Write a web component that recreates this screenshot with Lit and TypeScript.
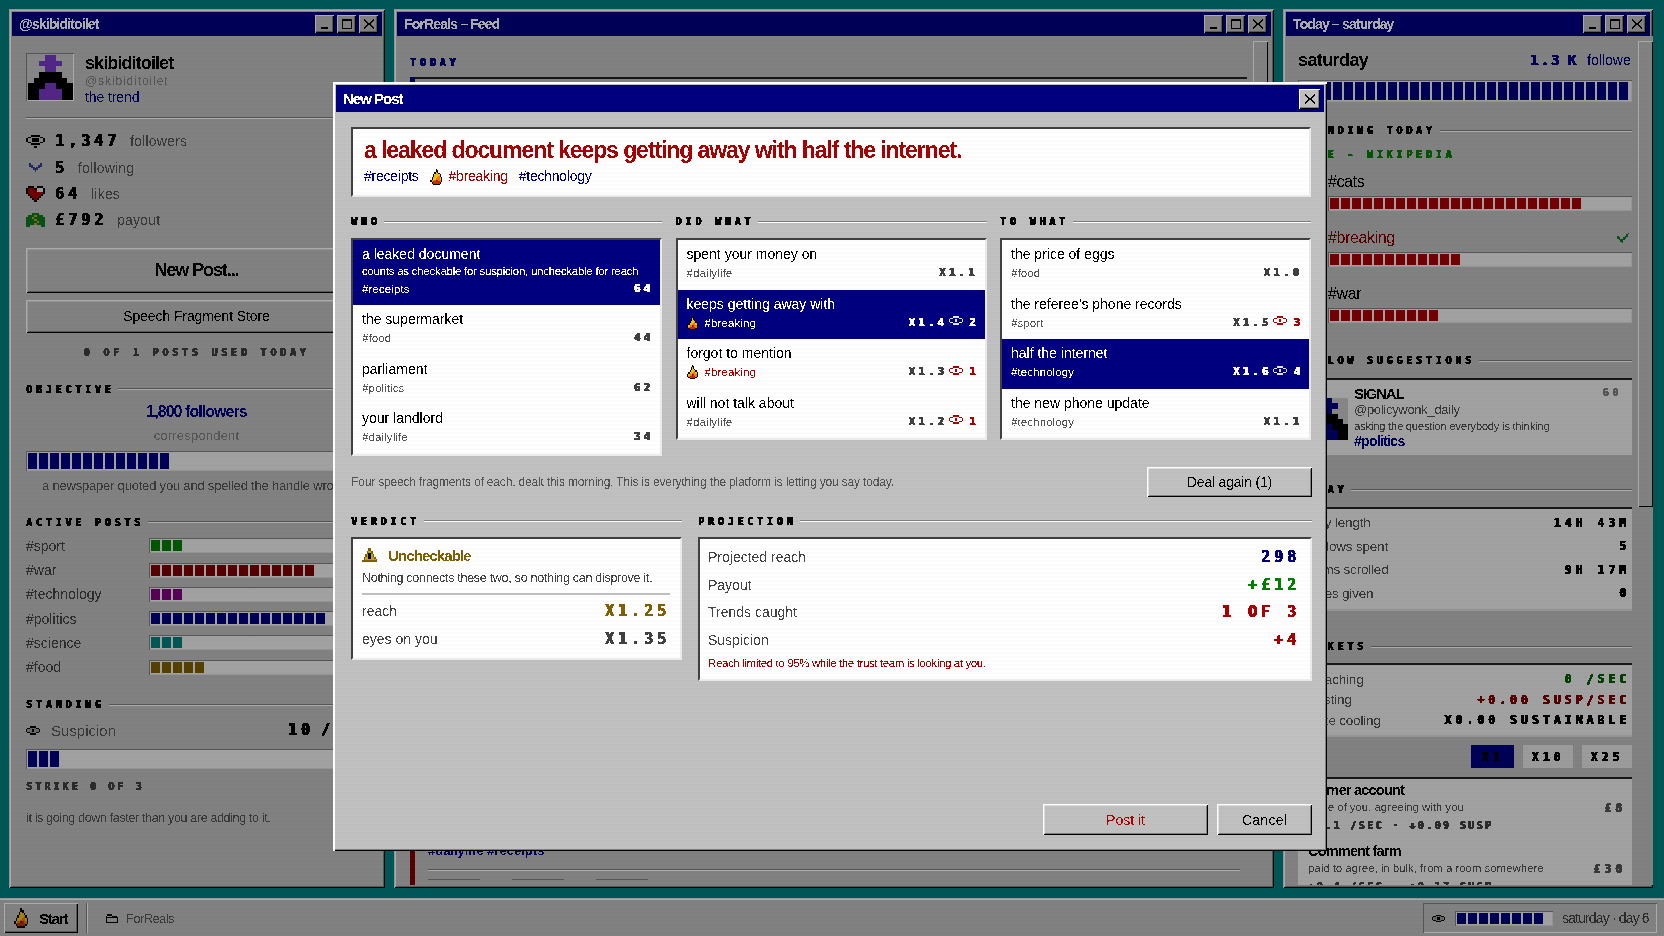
import { LitElement, html, css, svg, nothing } from "lit";
import { customElement } from "lit/decorators.js";

const PAL: Record<string, string> = {
  "#": "#000000", k: "#222222", w: "#ffffff", g: "#9a9a9a", d: "#555555",
  r: "#a80000", R: "#c82a10", y: "#f2c200", o: "#ee7a10", n: "#000080", N: "#3a3a9a",
  v: "#0a7a20", V: "#085a18", c: "#c0a020", a: "#806000", p: "#7a3ac8", P: "#e4e4e4",
};
function art(rows: string[], w: number, h: number) {
  const rects = [];
  for (let y = 0; y < rows.length; y++) {
    for (let x = 0; x < rows[y].length; x++) {
      const ch = rows[y][x];
      if (ch !== ".") rects.push(svg`<rect x=${x} y=${y} width="1.02" height="1.02" fill=${PAL[ch]}></rect>`);
    }
  }
  return html`<svg class="ic" width=${w} height=${h} viewBox="0 0 ${rows[0].length} ${rows.length}" shape-rendering="crispEdges">${rects}</svg>`;
}
const A_EYE = ["...######...", ".##......##.", "#...####...#", "#...####...#", ".##......##.", "...######...", "............", ".....##....."];
const A_EYE_SM = ["...####...", ".##gggg##.", "#ggg##ggg#", "#ggg##ggg#", ".##gggg##.", "...####..."];
const A_CHECK = ["N.....N", "NN...NN", ".NN.NN.", "..NNN..", "...N..."];
const A_CHECK_G = [".......v", "......v.", "v....vv.", "vv..vv..", ".vvvv...", "..vv....", "...v...."];
const A_HEART = [".###..###.", "#rrr##PPP#", "#rrrrrPPP#", "#rrrrrrrr#", ".#rrrrrr#.", "..#rrrr#..", "...#rr#...", "....##...."];
const A_MONEY = ["...vvvv...", ".vvvccvvv.", "vvvcvvvvvv", "vvvvccvvvv", "vvvvvvcvvv", "vvvvccvvvv", "vv......vv"];
const A_FLAME = ["....#.....", "....##....", "...#y#....", "...#yy#...", "..#yyyy#..", "..#yyyo#..", ".#yyyooy#.", ".#yyoooy#.", "#yoorRoo#.", "#oRRRRRo#.", ".#RRRRR#..", "..#####..."];
const A_WARN = ["....aa....", "....aa....", "...acca...", "...a##a...", "..ac##ca..", "..ac##ca..", ".acc##cca.", ".accccccca", "aaaaaaaaaa"];
const A_FOLDER = [".####.....", "#....####.", "##########", "#........#", "#........#", "#........#", "##########"];
const A_AVATAR = ["...pp...", "..pppp..", "...pp...", "..####..", ".######.", "###pp###", "##pppp##", "##pppp##"];
const A_AVATAR2 = ["...nn...", "..nnnn..", "...nn...", "..####..", ".######.", "###nn###", "##nnnn##", "##nnnn##"];

const eyeColored = (c: string) => {
  const m: Record<string, string> = { red: "r", white: "P" };
  const ch = m[c];
  return art([`...${ch.repeat(4)}...`, `.${ch}${ch}....${ch}${ch}.`, `${ch}...${ch}${ch}...${ch}`, `${ch}...${ch}${ch}...${ch}`, `.${ch}${ch}....${ch}${ch}.`, `...${ch.repeat(4)}...`], 14, 9);
};

const seg = (n: number, color: string) =>
  Array.from({ length: n }, () => html`<i class="seg" style="background:${color}"></i>`);
const sh = (t: string, cls = "") => html`<div class="sh ${cls}"><span class="d10">${t}</span><div class="ln"></div></div>`;

function closeX() {
  return html`<svg width="10" height="10" viewBox="0 0 10 10" shape-rendering="crispEdges"><path d="M0 0l5 4.2L10 0v1.4L6.2 5 10 8.6V10L5 5.8 0 10V8.6L3.8 5 0 1.4z" fill="#000"/></svg>`;
}
const WINBTN = html`<div class="wbs">
  <div class="wb"><svg width="12" height="10" viewBox="0 0 12 10" shape-rendering="crispEdges"><rect x="2" y="8" width="7" height="2" fill="#000"/></svg></div>
  <div class="wb"><svg width="12" height="10" viewBox="0 0 12 10" shape-rendering="crispEdges"><path d="M1 0h10v10H1zM2 2v7h8V2z" fill="#000" fill-rule="evenodd"/></svg></div>
  <div class="wb">${closeX()}</div>
</div>`;

const ACTIVE: [string, number, string][] = [
  ["#sport", 3, "#008000"], ["#war", 15, "#800000"], ["#technology", 3, "#800080"],
  ["#politics", 16, "#000080"], ["#science", 3, "#008080"], ["#food", 5, "#806000"],
];

type Item = { name: string; tag: string; val: string; eye?: number; flame?: boolean; hot?: boolean; sel?: boolean; sub?: string };
const WHO: Item[] = [
  { name: "a leaked document", tag: "#receipts", val: "64", sel: true, sub: "counts as checkable for suspicion, uncheckable for reach" },
  { name: "the supermarket", tag: "#food", val: "44" },
  { name: "parliament", tag: "#politics", val: "62" },
  { name: "your landlord", tag: "#dailylife", val: "34" },
];
const DID: Item[] = [
  { name: "spent your money on", tag: "#dailylife", val: "X1.1" },
  { name: "keeps getting away with", tag: "#breaking", val: "X1.4", eye: 2, flame: true, sel: true },
  { name: "forgot to mention", tag: "#breaking", val: "X1.3", eye: 1, flame: true, hot: true },
  { name: "will not talk about", tag: "#dailylife", val: "X1.2", eye: 1 },
];
const WHAT: Item[] = [
  { name: "the price of eggs", tag: "#food", val: "X1.0" },
  { name: "the referee's phone records", tag: "#sport", val: "X1.5", eye: 3 },
  { name: "half the internet", tag: "#technology", val: "X1.6", eye: 4, sel: true },
  { name: "the new phone update", tag: "#technology", val: "X1.1" },
];

@customElement("app-root")
export class AppRoot extends LitElement {
  static styles = css`
    :host { display: block; width: 1664px; height: 936px; position: relative; overflow: hidden; background: #008080;
      font-family: "Liberation Sans", Arial, sans-serif; color: #000; font-size: 14px; }
    * { box-sizing: border-box; }
    span { filter: url(#crisp); white-space: nowrap; }
    .d10, .d12, .d14 { filter: url(#crispd); text-shadow: 0.6px 0 currentColor; }
    .defs { position: absolute; width: 0; height: 0; }
    .ic { display: block; flex: none; }
    .desk { display: flex; flex-direction: column; height: 936px; }
    .wins { display: grid; grid-template-columns: 376px 880px 370px; column-gap: 9px; padding: 9px 0 0 9px; height: 888px; flex: none; }
    .win { background: #c0c0c0; padding: 3px; display: flex; flex-direction: column; overflow: hidden; min-height: 0;
      box-shadow: inset 1px 1px #dfdfdf, inset -1px -1px #0a0a0a, inset 2px 2px #fff, inset -2px -2px #808080; }
    .tb { height: 24px; background: #000080; color: #fff; display: flex; align-items: center; justify-content: space-between;
      padding: 0 4px 0 7px; flex: none; font-weight: 700; font-size: 14px; letter-spacing: -0.85px; }
    .wbs { display: flex; gap: 3px; }
    .wb { width: 19px; height: 18px; background: #c0c0c0; display: flex; align-items: center; justify-content: center;
      box-shadow: inset 1px 1px #fff, inset -1px -1px #000, inset -2px -2px #808080; }
    .d10 { font-family: "DejaVu Sans Mono", monospace; font-weight: 700; font-size: 10px; letter-spacing: 3.8px; text-transform: uppercase; line-height: 13px; }
    .d12 { font-family: "DejaVu Sans Mono", monospace; font-weight: 700; font-size: 11.5px; letter-spacing: 4px; line-height: 14px; }
    .d14 { font-family: "DejaVu Sans Mono", monospace; font-weight: 700; font-size: 15px; letter-spacing: 4px; line-height: 18px; }
    .sh { display: flex; align-items: center; gap: 4px; height: 13px; }
    .ln { flex: 1; height: 2px; background: #808080; border-bottom: 1px solid #fff; }
    .muted { color: #555; }
    .gray { color: #808080; }
    .navy { color: #000080; }
    .red { color: #aa0000; }
    .green { color: #008000; }
    .gold { color: #806000; }
    .dk { color: #404040; }

    .bar { display: flex; gap: 2px; padding: 2px 2px; background: #f0f0f0; height: 15px;
      box-shadow: inset 1px 1px #808080, inset -1px -1px #dfdfdf; overflow: hidden; }
    .bar.tall { height: 20px; }
    .seg { display: block; width: 9px; flex: none; height: 100%; }

    /* left */
    .lb { padding: 17px 15px 0 14px; display: flex; flex-direction: column; flex: 1; min-height: 0; }
    .prof { display: flex; gap: 11px; height: 48px; }
    .avatar { width: 48px; height: 48px; flex: none; background: #c8c8c8; padding: 1px; box-shadow: inset 1px 1px #808080, inset -1px -1px #fff; display: flex; }
    .avatar svg { margin: auto; }
    .pinfo { display: flex; flex-direction: column; }
    .pname { font-size: 18px; font-weight: 700; line-height: 20px; letter-spacing: -0.9px; }
    .ph { font-size: 12px; line-height: 15px; letter-spacing: 0.9px; margin-top: 1px; }
    .pt { font-size: 14px; line-height: 16px; letter-spacing: -0.1px; }
    .hr { height: 2px; background: #808080; border-bottom: 1px solid #fff; margin-top: 16px; flex: none; }
    .stats { margin-top: 9px; display: flex; flex-direction: column; }
    .stat { height: 26.4px; display: flex; align-items: center; gap: 10px; font-size: 14px; letter-spacing: 0.2px; }
    .stat .lab { color: #555; }
    .stat .iw { width: 19px; display: flex; justify-content: center; flex: none; }
    .btn { background: #c0c0c0; display: flex; align-items: center; justify-content: center; flex: none;
      box-shadow: inset 1px 1px #fff, inset -1px -1px #000, inset 2px 2px #dfdfdf, inset -2px -2px #808080; }
    .bnew { height: 45px; margin-top: 14px; font-weight: 700; font-size: 18px; letter-spacing: -1.1px; }
    .bstore { height: 33px; margin-top: 7px; font-size: 14px; letter-spacing: -0.1px; }
    .used { text-align: center; margin-top: 10px; height: 13px; }
    .used span { color: #404040; }
    .objh { margin-top: 27px; }
    .objt { text-align: center; font-size: 16px; font-weight: 700; color: #000080; letter-spacing: -0.95px; line-height: 20px; margin-top: 6px; }
    .objr { text-align: center; font-size: 13px; color: #808080; line-height: 18px; margin-top: 5px; letter-spacing: 0.2px; }
    .objb { margin-top: 6px; }
    .objq { text-align: center; font-size: 13px; line-height: 16px; margin-top: 7px; color: #555; letter-spacing: -0.2px; }
    .acth { margin-top: 22px; }
    .acts { margin-top: 5px; display: flex; flex-direction: column; }
    .act { height: 24.3px; display: flex; align-items: center; font-size: 14px; color: #444; }
    .act span { width: 123px; flex: none; }
    .act .bar { flex: 1; }
    .st { margin-top: 19px; }
    .susp { display: flex; align-items: center; margin-top: 8px; height: 22px; font-size: 15px; color: #555; gap: 11px; }
    .susp .v { margin-left: auto; color: #000; word-spacing: -6px; }
    .sbar { height: 20px; margin-top: 8px; }
    .strike { margin-top: 8px; height: 13px; }
    .strike span { color: #404040; letter-spacing: 3.1px; }
    .going { margin-top: 20px; font-size: 12.5px; color: #555; letter-spacing: -0.35px; line-height: 16px; }

    /* feed */
    .fb { flex: 1; display: flex; min-height: 0; padding-left: 13px; }
    .fc { flex: 1; padding-top: 17px; display: flex; flex-direction: column; min-width: 0; overflow: hidden; }
    .ftoday { color: #000080; height: 13px; }
    .post { margin-top: 11px; border-left: 5px solid #000080; box-shadow: inset 0 2px #222; height: 767px; flex: none; }
    .post2 { border-left: 5px solid #800000; padding: 0 7px 0 13px; height: 60px; flex: none; display: flex; flex-direction: column; }
    .ptags { color: #000080; font-size: 13px; line-height: 14px; font-weight: 700; }
    .post2 .hr { margin-top: 11px; }
    .pbtns { display: flex; gap: 32px; margin-top: 8px; }
    .pbtns i { width: 52px; height: 30px; background: #c0c0c0; box-shadow: inset 0 1px #808080; display: block; }
    .sbt { width: 18px; flex: none; background: #c0c0c0; margin: 0 1px 0 5px; }
    .thumb { width: 15px; height: 60px; margin: 5px 1px; background: #c0c0c0; box-shadow: inset 1px 1px #fff, inset -1px -1px #000; }

    /* right */
    .rb { flex: 1; display: flex; min-height: 0; padding-left: 12px; }
    .rc { width: 334px; flex: none; overflow: hidden; display: flex; flex-direction: column; padding-top: 12px; }
    .rh { display: flex; align-items: center; height: 24px; flex: none; }
    .rh .nm { width: 232px; flex: none; font-size: 18px; font-weight: 700; letter-spacing: -0.6px; }
    .rh .fl { display: flex; align-items: center; gap: 9px; color: #000080; }
    .rh .d12 { font-size: 14px; letter-spacing: 2px; word-spacing: -4px; }
    .rbar { height: 22px; margin-top: 8px; flex: none; }
    .rsh1 { margin-top: 22px; flex: none; }
    .live { color: #008000; margin-top: 8px; height: 13px; flex: none; }
    .tr { margin-top: 14px; flex: none; margin-left: 30px; }
    .tr .tl { display: flex; justify-content: space-between; align-items: center; height: 20px; font-size: 16px; padding-right: 3px; letter-spacing: -0.4px; }
    .tr .bar { margin-top: 4px; }
    .tr + .tr { margin-top: 17px; }
    .rsh2 { margin-top: 31px; flex: none; }
    .sug { margin-top: 11px; height: 77px; background: #f0f0f0; flex: none; display: flex; box-shadow: inset 0 2px #222; padding: 8px 10px 0 8px; gap: 6px; }
    .sug .av { width: 42px; height: 42px; background: #c8c8c8; margin-top: 12px; flex: none; }
    .sug .bd { flex: 1; display: flex; flex-direction: column; min-width: 0; }
    .sug .t1 { display: flex; justify-content: space-between; font-weight: 700; font-size: 15px; letter-spacing: -1.2px; line-height: 16px; }
    .sug .h { font-size: 13px; color: #555; line-height: 16px; letter-spacing: -0.3px; }
    .sug .q { font-size: 11.5px; color: #555; line-height: 16px; letter-spacing: -0.35px; }
    .sug .g { font-size: 14px; font-weight: 700; color: #000080; line-height: 14px; letter-spacing: -0.7px; }
    .rsh3 { margin-top: 28px; flex: none; }
    .panel { background: #f0f0f0; flex: none; box-shadow: inset 0 2px #222, inset 0 -2px #dfdfdf; padding: 4px 6px 0 10px; }
    .pn1 { margin-top: 11px; height: 104px; }
    .kv { display: flex; justify-content: space-between; align-items: center; height: 23.5px; font-size: 13.5px; color: #555; letter-spacing: -0.2px; }
    .kv .d12 { color: #000; letter-spacing: 4px; margin-right: -4px; }
    .rsh4 { margin-top: 29px; flex: none; }
    .pn2 { margin-top: 10px; height: 74px; padding-top: 6px; }
    .pn2 .kv { height: 20.5px; }
    .mul { display: flex; justify-content: flex-end; gap: 9px; margin-top: 8px; height: 23px; flex: none; }
    .mul div { background: #e8e8e8; width: 50px; display: flex; align-items: center; justify-content: center; }
    .mul .on { background: #000080; width: 43px; }
    .pn3 { margin-top: 9px; height: 130px; padding: 4px 6px 0 10px; box-shadow: inset 0 2px #222; }
    .sh1 { font-weight: 700; font-size: 14.5px; line-height: 19px; letter-spacing: -0.8px; }
    .sh2 { display: flex; justify-content: space-between; font-size: 11.5px; color: #555; line-height: 15px; letter-spacing: -0.05px; align-items: center; }
    .sh3 { line-height: 16px; margin-top: 1px; height: 17px; }
    .sh3 span { color: #404040; letter-spacing: 2.4px; }
    .sh1b { margin-top: 9px; }

    /* taskbar */
    .task { height: 38px; margin-top: 10px; background: #c0c0c0; box-shadow: inset 0 1px #dfdfdf, inset 0 2px #fff; display: flex; align-items: center; padding: 3px 7px 1px 4px; flex: none; }
    .start { width: 74px; height: 30px; display: flex; align-items: center; gap: 9px; padding-left: 10px; font-weight: 700; font-size: 15px; letter-spacing: -1.2px; background: #c0c0c0;
      box-shadow: inset 1px 1px #fff, inset -1px -1px #000, inset -2px -2px #808080; }
    .tsep { width: 2px; height: 30px; margin: 0 18px 0 8px; background: #808080; border-right: 1px solid #fff; }
    .ttask { display: flex; align-items: center; gap: 8px; font-size: 13px; letter-spacing: -0.6px; }
    .tray { margin-left: auto; width: 234px; height: 30px; display: flex; align-items: center; padding: 0 8px 0 9px; box-shadow: inset 1px 1px #808080, inset -1px -1px #fff; font-size: 14px; letter-spacing: -0.85px; }
    .tray .bar { width: 98px; margin: 0 9px 0 10px; }

    /* modal */
    .ov { position: absolute; inset: 0; background: rgba(0, 0, 0, 0.33); display: flex; align-items: center; justify-content: center; }
    .dlg { width: 994px; height: 769px; margin: -3px 0 0 -4px; background: #c0c0c0; padding: 3px; display: flex; flex-direction: column;
      box-shadow: inset 1px 1px #fff, inset 2px 2px #fff, inset -1px -1px #000, inset -2px -2px #808080; }
    .dt { height: 27px; background: #000080; color: #fff; display: flex; align-items: center; justify-content: space-between; padding: 0 4px 0 7px; font-weight: 700; font-size: 15px; letter-spacing: -1px; flex: none; }
    .dx { width: 21px; height: 20px; background: #c0c0c0; display: flex; align-items: center; justify-content: center; box-shadow: inset 1px 1px #fff, inset -1px -1px #000, inset -2px -2px #808080; }
    .dc { flex: 1; padding: 15px 13px 13px 15px; display: flex; flex-direction: column; min-height: 0; }
    .inset { background: #fff; border: 2px solid; border-color: #404040 #ececec #ececec #404040; }
    .pv { height: 70px; padding: 7px 11px 0 11px; flex: none; }
    .hl { color: #aa0000; font-size: 23px; font-weight: 700; line-height: 28px; letter-spacing: -1.08px; display: block; }
    .pvt { display: flex; align-items: center; font-size: 14px; margin-top: 4px; line-height: 17px; letter-spacing: -0.25px; }
    .cols { display: grid; grid-template-columns: repeat(3, minmax(0, 1fr)); column-gap: 13.5px; margin-top: 18px; align-items: start; flex: none; }
    .list { margin-top: 10px; display: flex; flex-direction: column; }
    .it { height: 49.5px; padding: 4px 7px 0 9px; display: flex; flex-direction: column; }
    .it.sel { background: #000080; color: #fff; }
    .it.big { height: 65px; }
    .in { font-size: 14px; line-height: 20px; height: 20px; letter-spacing: 0; }
    .isub { font-size: 11.5px; line-height: 17px; height: 17px; letter-spacing: -0.27px; margin-top: -1px; }
    .ir { display: flex; align-items: center; height: 18px; }
    .itag { font-size: 11.5px; color: #555; letter-spacing: 0.1px; margin-right: auto; }
    .sel .itag { color: #fff; }
    .itag.hot { color: #aa0000; }
    .ifl { margin-right: 6px; }
    .ival { color: #404040; letter-spacing: 3px; font-size: 11px; }
    .sel .ival { color: #fff; }
    .ie { margin: 0 6px 0 2px; position: relative; top: -2px; }
    .iev { color: #aa0000; letter-spacing: 2px; font-size: 11px; }
    .sel .iev { color: #fff; }
    .dealr { display: flex; justify-content: space-between; align-items: center; margin-top: 11px; flex: none; }
    .dealr > span { font-size: 12px; color: #555; letter-spacing: -0.17px; }
    .bdeal { width: 165px; height: 30px; font-size: 14px; margin-right: -1px; letter-spacing: -0.2px; }
    .vp { display: grid; grid-template-columns: 331px minmax(0, 1fr); column-gap: 16px; margin-top: 18px; align-items: start; flex: none; margin-right: -1px; }
    .vb { margin-top: 9px; height: 123px; padding: 8px 10px 0 9px; }
    .vt { display: flex; align-items: center; gap: 11px; height: 17px; font-size: 15px; font-weight: 700; letter-spacing: -0.9px; color: #806000; }
    .vd { font-size: 12.5px; line-height: 15px; margin-top: 7px; color: #444; letter-spacing: -0.28px; }
    .vh { height: 2px; background: #c0c0c0; margin-top: 7px; }
    .vr { height: 28px; display: flex; justify-content: space-between; align-items: center; font-size: 14px; color: #444; }
    .vrs { margin-top: 2px; }
    .pb { margin-top: 9px; height: 144px; padding: 5px 10px 0 8px; }
    .pr { height: 27.6px; display: flex; justify-content: space-between; align-items: center; font-size: 14px; color: #444; }
    .pn { font-size: 11.5px; color: #aa0000; line-height: 15px; margin-top: 2px; letter-spacing: -0.38px; display: block; }
    .df { margin-top: auto; display: flex; justify-content: flex-end; gap: 9px; margin-right: -1px; }
    .bpost { width: 165px; height: 31px; color: #aa0000; font-size: 14px; }
    .bcancel { width: 95px; height: 31px; font-size: 14px; letter-spacing: 0.3px; }
    .scan { position: absolute; inset: 0; pointer-events: none;
      background: repeating-linear-gradient(180deg, rgba(0,0,0,0.012) 0 2px, rgba(255,255,255,0) 2px 4px); }
  `;

  private listItem(i: Item) {
    return html`<div class="it ${i.sel ? "sel" : ""} ${i.sub ? "big" : ""}">
      <div class="in"><span>${i.name}</span></div>
      ${i.sub ? html`<div class="isub"><span>${i.sub}</span></div>` : nothing}
      <div class="ir">
        ${i.flame ? html`<div class="ifl">${art(A_FLAME, 12, 14)}</div>` : nothing}
        <span class="itag ${i.hot ? "hot" : ""}">${i.tag}</span>
        <span class="d12 ival">${i.val}</span>
        ${i.eye
          ? html`<div class="ie">${eyeColored(i.sel ? "white" : "red")}</div><span class="d12 iev">${i.eye}</span>`
          : nothing}
      </div>
    </div>`;
  }

  render() {
    return html`
      <svg class="defs">
        <filter id="crisp" x="0" y="0" width="100%" height="100%" color-interpolation-filters="sRGB">
          <feComponentTransfer><feFuncA type="discrete" tableValues="0 0 1 1"></feFuncA></feComponentTransfer>
        </filter>
        <filter id="crispd" x="0" y="0" width="100%" height="100%" color-interpolation-filters="sRGB">
          <feComponentTransfer><feFuncA type="discrete" tableValues="0 1 1 1"></feFuncA></feComponentTransfer>
        </filter>
      </svg>
      <div class="desk">
        <div class="wins">
          ${this.leftWin()}
          ${this.feedWin()}
          ${this.rightWin()}
        </div>
        <div class="task">
          <div class="start">${art(A_FLAME, 16, 20)}<span>Start</span></div>
          <div class="tsep"></div>
          <div class="ttask">${art(A_FOLDER, 12, 9)}<span class="muted">ForReals</span></div>
          <div class="tray">${art(A_EYE_SM, 13, 9)}<div class="bar">${seg(8, "#000080")}</div><span class="dk">saturday · day 6</span></div>
        </div>
      </div>
      <div class="ov">${this.dialog()}</div>
      <div class="scan"></div>
    `;
  }

  private leftWin() {
    return html`<div class="win">
      <div class="tb"><span>@skibiditoilet</span>${WINBTN}</div>
      <div class="lb">
        <div class="prof">
          <div class="avatar">${art(A_AVATAR, 45, 45)}</div>
          <div class="pinfo">
            <span class="pname">skibiditoilet</span>
            <span class="ph gray">@skibiditoilet</span>
            <span class="pt navy">the trend</span>
          </div>
        </div>
        <div class="hr"></div>
        <div class="stats">
          <div class="stat"><div class="iw">${art(A_EYE, 19, 15)}</div><span class="d14">1,347</span><span class="lab">followers</span></div>
          <div class="stat"><div class="iw">${art(A_CHECK, 13, 9)}</div><span class="d14">5</span><span class="lab">following</span></div>
          <div class="stat"><div class="iw">${art(A_HEART, 19, 16)}</div><span class="d14">64</span><span class="lab">likes</span></div>
          <div class="stat"><div class="iw">${art(A_MONEY, 19, 14)}</div><span class="d14">£792</span><span class="lab">payout</span></div>
        </div>
        <div class="btn bnew"><span>New Post...</span></div>
        <div class="btn bstore"><span>Speech Fragment Store</span></div>
        <div class="used"><span class="d10">0 of 1 posts used today</span></div>
        ${sh("OBJECTIVE", "objh")}
        <div class="objt"><span>1,800 followers</span></div>
        <div class="objr"><span>correspondent</span></div>
        <div class="bar tall objb">${seg(13, "#000080")}</div>
        <div class="objq"><span>a newspaper quoted you and spelled the handle wrong.</span></div>
        ${sh("ACTIVE POSTS", "acth")}
        <div class="acts">
          ${ACTIVE.map(([t, n, c]) => html`<div class="act"><span>${t}</span><div class="bar">${seg(n, c)}</div></div>`)}
        </div>
        ${sh("STANDING", "st")}
        <div class="susp">${art(A_EYE_SM, 14, 9)}<span>Suspicion</span><span class="d14 v">10 / 30</span></div>
        <div class="bar sbar">${seg(3, "#000080")}</div>
        <div class="strike"><span class="d10">strike 0 of 3</span></div>
        <div class="going"><span>it is going down faster than you are adding to it.</span></div>
      </div>
    </div>`;
  }

  private feedWin() {
    return html`<div class="win">
      <div class="tb"><span>ForReals – Feed</span>${WINBTN}</div>
      <div class="fb">
        <div class="fc">
          <div class="ftoday"><span class="d10">TODAY</span></div>
          <div class="post"></div>
          <div class="post2">
            <span class="ptags">#dailylife #receipts</span>
            <div class="hr"></div>
            <div class="pbtns"><i></i><i></i><i></i></div>
          </div>
        </div>
        <div class="sbt"><div class="thumb"></div></div>
      </div>
    </div>`;
  }

  private rightWin() {
    return html`<div class="win">
      <div class="tb"><span>Today – saturday</span>${WINBTN}</div>
      <div class="rb">
        <div class="rc">
          <div class="rh"><span class="nm">saturday</span><div class="fl"><span class="d12">1.3 K</span><span>followers</span></div></div>
          <div class="bar rbar">${seg(30, "#000080")}</div>
          ${sh("TRENDING TODAY", "rsh1")}
          <div class="live"><span class="d10">LIVE - WIKIPEDIA</span></div>
          <div class="tr"><div class="tl"><span>#cats</span></div><div class="bar">${seg(23, "#aa0000")}</div></div>
          <div class="tr"><div class="tl"><span style="color:#800000">#breaking</span>${art(A_CHECK_G, 12, 12)}</div><div class="bar">${seg(12, "#aa0000")}</div></div>
          <div class="tr"><div class="tl"><span>#war</span></div><div class="bar">${seg(10, "#aa0000")}</div></div>
          ${sh("FOLLOW SUGGESTIONS", "rsh2")}
          <div class="sug">
            <div class="av">${art(A_AVATAR2, 42, 42)}</div>
            <div class="bd">
              <div class="t1"><span>SIGNAL</span><span class="d10 gray">60</span></div>
              <span class="h">@policywonk_daily</span>
              <span class="q">asking the question everybody is thinking</span>
              <span class="g">#politics</span>
            </div>
          </div>
          ${sh("TODAY", "rsh3")}
          <div class="panel pn1">
            <div class="kv"><span>Day length</span><span class="d12">14H 43M</span></div>
            <div class="kv"><span>Follows spent</span><span class="d12">5</span></div>
            <div class="kv"><span>Items scrolled</span><span class="d12">9H 17M</span></div>
            <div class="kv"><span>Likes given</span><span class="d12">0</span></div>
          </div>
          ${sh("MARKETS", "rsh4")}
          <div class="panel pn2">
            <div class="kv"><span>Reaching</span><span class="d12" style="color:#006000">0 /SEC</span></div>
            <div class="kv"><span>Posting</span><span class="d12" style="color:#800000">+0.00 SUSP/SEC</span></div>
            <div class="kv"><span>Rate cooling</span><span class="d12">X0.00 SUSTAINABLE</span></div>
          </div>
          <div class="mul">
            <div class="on"><span class="d12">X1</span></div>
            <div><span class="d12">X10</span></div>
            <div><span class="d12">X25</span></div>
          </div>
          <div class="panel pn3">
            <div class="sh1"><span>Burner account</span></div>
            <div class="sh2"><span>more of you, agreeing with you</span><span class="d12">£8</span></div>
            <div class="sh3"><span class="d10">+0.1 /SEC · +0.09 SUSP</span></div>
            <div class="sh1 sh1b"><span>Comment farm</span></div>
            <div class="sh2"><span>paid to agree, in bulk, from a room somewhere</span><span class="d12">£30</span></div>
            <div class="sh3"><span class="d10">+0.4 /SEC · +0.17 SUSP</span></div>
          </div>
        </div>
        <div class="sbt"><div class="thumb" style="height:466px"></div></div>
      </div>
    </div>`;
  }

  private dialog() {
    return html`<div class="dlg">
      <div class="dt"><span>New Post</span><div class="dx">${closeX()}</div></div>
      <div class="dc">
        <div class="inset pv">
          <span class="hl">a leaked document keeps getting away with half the internet.</span>
          <div class="pvt">
            <span class="navy">#receipts</span>
            <div style="margin:0 5px 0 11px">${art(A_FLAME, 14, 16)}</div>
            <span class="red">#breaking</span>
            <span class="navy" style="margin-left:11px">#technology</span>
          </div>
        </div>
        <div class="cols">
          <div>${sh("WHO")}<div class="inset list">${WHO.map((i) => this.listItem(i))}</div></div>
          <div>${sh("DID WHAT")}<div class="inset list">${DID.map((i) => this.listItem(i))}</div></div>
          <div>${sh("TO WHAT")}<div class="inset list">${WHAT.map((i) => this.listItem(i))}</div></div>
        </div>
        <div class="dealr">
          <span>Four speech fragments of each, dealt this morning. This is everything the platform is letting you say today.</span>
          <div class="btn bdeal"><span>Deal again (1)</span></div>
        </div>
        <div class="vp">
          <div>
            ${sh("VERDICT")}
            <div class="inset vb">
              <div class="vt">${art(A_WARN, 15, 14)}<span>Uncheckable</span></div>
              <div class="vd"><span>Nothing connects these two, so nothing can disprove it.</span></div>
              <div class="vh"></div>
              <div class="vr vrs"><span>reach</span><span class="d14 gold">X1.25</span></div>
              <div class="vr"><span>eyes on you</span><span class="d14 dk">X1.35</span></div>
            </div>
          </div>
          <div>
            ${sh("PROJECTION")}
            <div class="inset pb">
              <div class="pr"><span>Projected reach</span><span class="d14 navy">298</span></div>
              <div class="pr"><span>Payout</span><span class="d14 green">+£12</span></div>
              <div class="pr"><span>Trends caught</span><span class="d14 red">1 OF 3</span></div>
              <div class="pr"><span>Suspicion</span><span class="d14 red">+4</span></div>
              <span class="pn">Reach limited to 95% while the trust team is looking at you.</span>
            </div>
          </div>
        </div>
        <div class="df">
          <div class="btn bpost"><span>Post it</span></div>
          <div class="btn bcancel"><span>Cancel</span></div>
        </div>
      </div>
    </div>`;
  }
}
